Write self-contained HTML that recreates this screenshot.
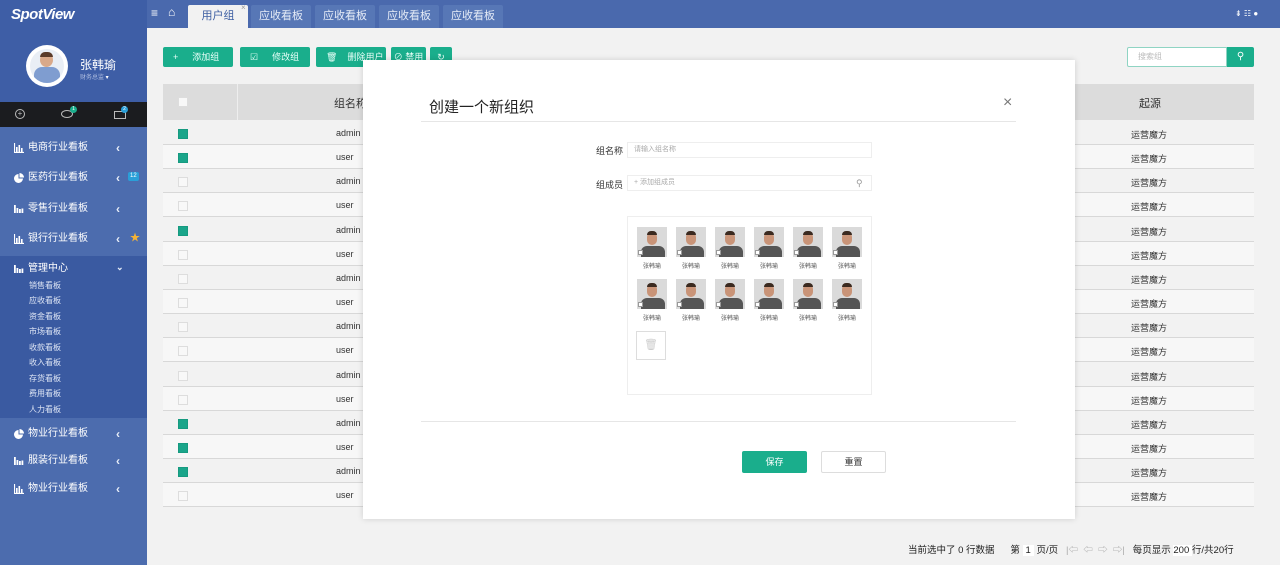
<!DOCTYPE html>
<html><head><meta charset="utf-8">
<style>
*{margin:0;padding:0;box-sizing:border-box}
body{width:1280px;height:565px;overflow:hidden;background:#f2f2f2;font-family:"Liberation Sans","Noto Sans CJK SC",sans-serif;position:relative;color:#333}
.a{position:absolute}
#side{left:0;top:0;width:147px;height:565px;background:#4c6cae}
#top{left:147px;top:0;width:1133px;height:28px;background:#4a69ad}
.tab{top:5px;height:23px;background:#5777b6;color:#e6ecf7;font-size:11px;text-align:center;line-height:23px;border-radius:2px 2px 0 0}
.btn{top:47px;height:20px;background:#1aae8c;color:#e8fff8;font-size:9px;line-height:20px;border-radius:2px}
.mi{left:0;width:147px;color:#fff;font-size:10px;height:14px;line-height:14px}
.mi svg{position:absolute;left:14px;top:2px}
.mi .l{position:absolute;left:28px}
.mi .c{position:absolute;left:116px;top:0;font-size:12px;font-weight:bold;color:#e8eef8}
.sub{left:29px;color:#dfe6f5;font-size:8px}
.row{left:163px;width:1091px;height:24px;border-bottom:1px solid #d8d8d8}
.cb{left:178px;width:10px;height:10px;border:1px solid #ddd;background:#f8f8f8}
.cb.on{background:#1aa58a;border-color:#169a80}
.txt{font-size:9px;color:#333}
.ph{width:30px;height:30px;background:#dadada;overflow:hidden}
.nm{font-size:6px;color:#555;width:30px;text-align:center}
</style></head><body>
<svg width="0" height="0" style="position:absolute"><defs>
<symbol id="bar" viewBox="0 0 10 10"><path d="M0.5 0v9.5H10" stroke="#fff" stroke-width="1.2" fill="none"/><rect x="2" y="4" width="1.6" height="5" fill="#fff"/><rect x="4.5" y="2" width="1.6" height="7" fill="#fff"/><rect x="7" y="5" width="1.6" height="4" fill="#fff"/></symbol>
<symbol id="bar2" viewBox="0 0 10 10"><rect x="0" y="1" width="1.8" height="8" fill="#fff"/><rect x="2.5" y="4" width="1.8" height="5" fill="#fff"/><rect x="5" y="5" width="1.8" height="4" fill="#fff"/><rect x="7.5" y="4.5" width="1.8" height="4.5" fill="#fff"/></symbol>
<symbol id="pie" viewBox="0 0 10 10"><path d="M4.5 1A4.5 4.5 0 1 0 9 5.5H4.5Z" fill="#fff"/><path d="M5.5 0V4.5H10A4.5 4.5 0 0 0 5.5 0Z" fill="#fff"/></symbol>
</defs></svg>
<div id="side" class="a">
 <div class="a" style="left:0;top:0;width:147px;height:102px;background:#3e5ea6"></div>
 <div class="a" style="left:11px;top:6px;color:#fff;font-size:15px;font-weight:bold;font-style:italic;letter-spacing:-0.5px">SpotView</div>
 <div class="a" style="left:26px;top:45px;width:42px;height:42px;border-radius:50%;background:#fff;overflow:hidden">
  <div class="a" style="left:4px;top:4px;width:34px;height:34px;border-radius:50%;background:#e9eef5;overflow:hidden">
   <div class="a" style="left:10px;top:4px;width:13px;height:14px;border-radius:50%;background:#d9a98a"></div>
   <div class="a" style="left:10px;top:3px;width:13px;height:5px;border-radius:6px 6px 0 0;background:#5a3b2a"></div>
   <div class="a" style="left:4px;top:18px;width:26px;height:18px;border-radius:8px 8px 0 0;background:#7f9dd0"></div>
  </div>
 </div>
 <div class="a" style="left:80px;top:56px;color:#fff;font-size:12px">张韩瑜</div>
 <div class="a" style="left:80px;top:72px;color:#aebde0;font-size:6px">财务总监 <span style="color:#fff">▾</span></div>
 <div class="a" style="left:0;top:102px;width:147px;height:25px;background:#1b1c1f"></div>
 <div class="a" style="left:15px;top:109px;width:10px;height:10px;border:1px solid #bbb;border-radius:50%;color:#bbb;font-size:8px;line-height:8px;text-align:center">+</div>
 <div class="a" style="left:61px;top:110px;width:12px;height:8px;border:1px solid #bbb;border-radius:50%"></div>
 <div class="a" style="left:70px;top:106px;width:7px;height:7px;border-radius:50%;background:#1aae8c;font-size:5px;color:#fff;text-align:center;line-height:7px">1</div>
 <div class="a" style="left:114px;top:111px;width:12px;height:8px;border:1px solid #bbb"></div>
 <div class="a" style="left:121px;top:106px;width:7px;height:7px;border-radius:50%;background:#2a9fd8;font-size:5px;color:#fff;text-align:center;line-height:7px">2</div>
 <div class="a mi" style="top:141px"><svg width="10" height="10"><use href="#bar"/></svg><span class="l">电商行业看板</span><span class="c">‹</span></div>
 <div class="a mi" style="top:171px"><svg width="10" height="10"><use href="#pie"/></svg><span class="l">医药行业看板</span><span class="c">‹</span><span class="a" style="left:128px;top:1px;background:#2a9fd8;font-size:6px;line-height:9px;padding:0 2px;border-radius:2px">12</span></div>
 <div class="a mi" style="top:202px"><svg width="10" height="10"><use href="#bar2"/></svg><span class="l">零售行业看板</span><span class="c">‹</span></div>
 <div class="a mi" style="top:232px"><svg width="10" height="10"><use href="#bar"/></svg><span class="l">银行行业看板</span><span class="c">‹</span><span class="a" style="left:130px;color:#f5b335">★</span></div>
 <div class="a" style="left:0;top:256px;width:147px;height:162px;background:#3a5aa1"></div>
 <div class="a mi" style="top:262px"><svg width="10" height="10"><use href="#bar2"/></svg><span class="l">管理中心</span><span class="c" style="font-size:9px;top:-2px">⌄</span></div>
 <div class="a sub" style="top:280px">销售看板</div>
 <div class="a sub" style="top:295px">应收看板</div>
 <div class="a sub" style="top:311px">资金看板</div>
 <div class="a sub" style="top:326px">市场看板</div>
 <div class="a sub" style="top:342px">收款看板</div>
 <div class="a sub" style="top:357px">收入看板</div>
 <div class="a sub" style="top:373px">存货看板</div>
 <div class="a sub" style="top:388px">费用看板</div>
 <div class="a sub" style="top:404px">人力看板</div>
 <div class="a mi" style="top:427px"><svg width="10" height="10"><use href="#pie"/></svg><span class="l">物业行业看板</span><span class="c">‹</span></div>
 <div class="a mi" style="top:454px"><svg width="10" height="10"><use href="#bar2"/></svg><span class="l">服装行业看板</span><span class="c">‹</span></div>
 <div class="a mi" style="top:482px"><svg width="10" height="10"><use href="#bar"/></svg><span class="l">物业行业看板</span><span class="c">‹</span></div>
</div>
<div id="top" class="a">
 <div class="a" style="left:4px;top:7px;color:#fff;font-size:12px;line-height:12px">≡</div>
 <div class="a" style="left:21px;top:6px;color:#fff;font-size:12px;line-height:12px">⌂</div>
 <div class="a tab" style="left:41px;width:60px;background:#f2f2f2;color:#3d5fa3">用户组</div>
 <div class="a" style="left:94px;top:3px;color:#999;font-size:8px">×</div>
 <div class="a tab" style="left:104px;width:60px">应收看板</div>
 <div class="a tab" style="left:168px;width:60px">应收看板</div>
 <div class="a tab" style="left:232px;width:60px">应收看板</div>
 <div class="a tab" style="left:296px;width:60px">应收看板</div>
 <div class="a" style="left:1088px;top:9px;color:#fff;font-size:8px">⇟ ☷ ●</div>
</div>
<div class="a btn" style="left:163px;width:70px"><span style="margin-left:10px">+</span><span style="margin-left:14px">添加组</span></div>
<div class="a btn" style="left:240px;width:70px"><span style="margin-left:10px">☑</span><span style="margin-left:14px">修改组</span></div>
<div class="a btn" style="left:316px;width:70px"><span style="margin-left:10px">🗑</span><span style="margin-left:10px">删除用户</span></div>
<div class="a btn" style="left:391px;width:35px;text-align:center">⊘ 禁用</div>
<div class="a btn" style="left:430px;width:22px;text-align:center">↻</div>
<div class="a" style="left:1127px;top:47px;width:100px;height:20px;background:#fff;border:1px solid #8fd4c3;border-radius:2px 0 0 2px;font-size:8px;color:#bbb;line-height:18px;padding-left:10px">搜索组</div>
<div class="a" style="left:1227px;top:47px;width:27px;height:20px;background:#1aae8c;border-radius:0 2px 2px 0;color:#fff;font-size:10px;text-align:center;line-height:20px">⚲</div>
<div class="a" style="left:163px;top:84px;width:1091px;height:36px;background:#dcdcdc"></div>
<div class="a" style="left:237px;top:84px;width:1px;height:36px;background:#eee"></div>
<div class="a cb" style="top:97px"></div>
<div class="a" style="left:334px;top:95px;font-size:11px">组名称</div>
<div class="a" style="left:1139px;top:95px;font-size:11px">起源</div>
<div id="rows"></div>
<div class="a" style="left:363px;top:60px;width:712px;height:459px;background:#fff;box-shadow:0 0 6px rgba(0,0,0,.15)">
 <div class="a" style="left:66px;top:36px;font-size:15px;color:#222">创建一个新组织</div>
 <div class="a" style="left:640px;top:34px;font-size:16px;color:#777;font-weight:100">×</div>
 <div class="a" style="left:58px;top:61px;width:595px;height:1px;background:#e6e6e6"></div>
 <div class="a" style="left:233px;top:84px;font-size:9px">组名称</div>
 <div class="a" style="left:264px;top:82px;width:245px;height:16px;border:1px solid #eee;font-size:7px;color:#aaa;line-height:14px;padding-left:6px">请输入组名称</div>
 <div class="a" style="left:233px;top:118px;font-size:9px">组成员</div>
 <div class="a" style="left:264px;top:115px;width:245px;height:16px;border:1px solid #eee;font-size:7px;color:#aaa;line-height:14px;padding-left:6px">+ 添加组成员<span class="a" style="left:228px;top:0;color:#999;font-size:9px">⚲</span></div>
 <div class="a" style="left:264px;top:156px;width:245px;height:179px;border:1px solid #eee"></div>
 <div id="photos"></div>
 <div class="a" style="left:273px;top:271px;width:30px;height:29px;border:1px solid #ddd;color:#ccc;font-size:11px;text-align:center;line-height:27px">🗑</div>
 <div class="a" style="left:58px;top:361px;width:595px;height:1px;background:#e6e6e6"></div>
 <div class="a" style="left:379px;top:391px;width:65px;height:22px;background:#1aae8c;color:#fff;font-size:9px;text-align:center;line-height:22px;border-radius:2px">保存</div>
 <div class="a" style="left:458px;top:391px;width:65px;height:22px;border:1px solid #ddd;font-size:9px;text-align:center;line-height:20px;border-radius:2px">重置</div>
</div>
<div class="a" style="left:908px;top:542px;font-size:9.5px;color:#222;white-space:pre">当前选中了 0 行数据      第 <span style="background:#fff;padding:0 3px">1</span> 页/页   <span style="color:#aaa">|⇦  ⇦  ⇨  ⇨|</span>   每页显示 <span style="background:#fff">200 </span>行/共20行</div>
<script>
var on=[0,1,4,12,13,14],h='';
for(var i=0;i<16;i++){var t=121+i*24.15;
h+='<div class="a row" style="top:'+t+'px;background:'+(i%2?'#f7f7f7':'#f2f2f2')+'"></div>';
h+='<div class="a cb'+(on.indexOf(i)>=0?' on':'')+'" style="top:'+(t+8)+'px"></div>';
h+='<div class="a txt" style="left:336px;top:'+(t+7)+'px">'+(i%2?'user':'admin')+'</div>';
h+='<div class="a txt" style="left:1131px;top:'+(t+7)+'px">运营魔方</div>';}
document.getElementById('rows').outerHTML=h;
var p='';
for(var r=0;r<2;r++)for(var c=0;c<6;c++){var x=274+c*39,y=167+r*52;
p+='<div class="a ph" style="left:'+x+'px;top:'+y+'px"><div class="a" style="left:10px;top:5px;width:10px;height:13px;border-radius:5px;background:#c99478"></div><div class="a" style="left:10px;top:4px;width:10px;height:4px;border-radius:5px 5px 0 0;background:#3b2a20"></div><div class="a" style="left:4px;top:19px;width:24px;height:12px;border-radius:6px 6px 0 0;background:#555"></div><div class="a" style="left:1px;top:23px;width:5px;height:5px;background:#fff;border:1px solid #999"></div></div>';
p+='<div class="a nm" style="left:'+x+'px;top:'+(y+34)+'px">张韩瑜</div>';}
document.getElementById('photos').outerHTML=p;
</script>
</body></html>
